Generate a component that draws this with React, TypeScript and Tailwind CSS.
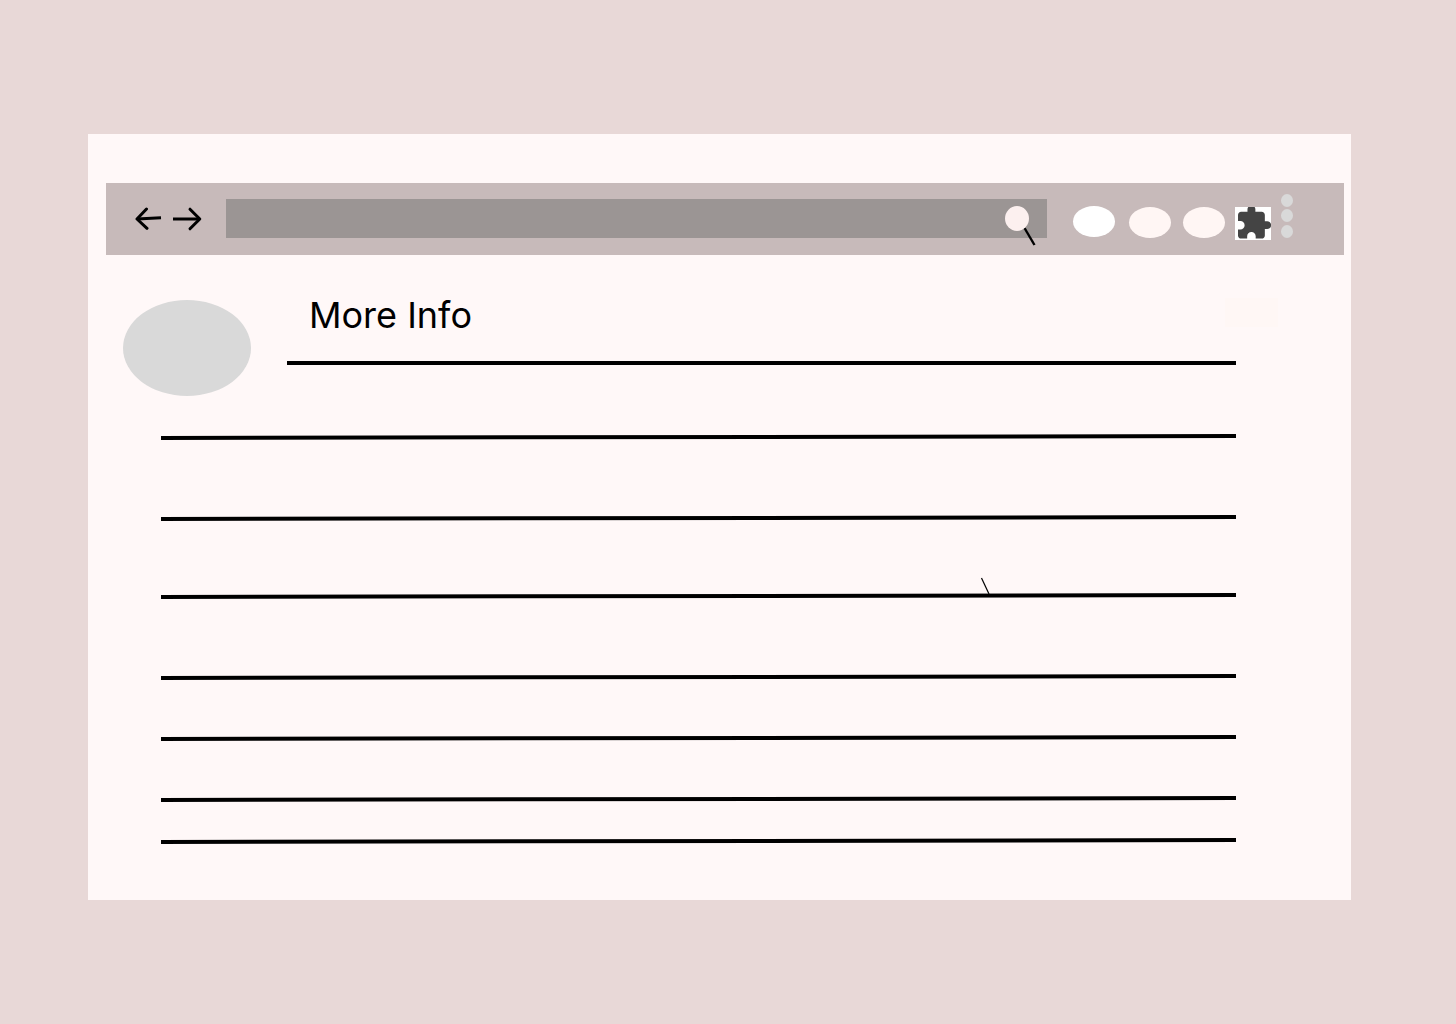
const lines = [
  { id: 1, gap: '' },
  { id: 2, gap: 'mt-[75px]' },
  { id: 3, gap: 'mt-[72px]', tick: true },
  { id: 4, gap: 'mt-[75px]' },
  { id: 5, gap: 'mt-[55px]' },
  { id: 6, gap: 'mt-[55px]' },
  { id: 7, gap: 'mt-9' },
];

function Rule() {
  return (
    <svg className="block h-1.5 w-full" viewBox="0 0 1075 6" preserveAspectRatio="none" aria-hidden="true">
      <line x1="0" y1="4" x2="1075" y2="2" stroke="#000" strokeWidth="4" />
    </svg>
  );
}

function Toolbar() {
  return (
    <header className="flex h-[72px] items-start bg-[#c7baba] pr-[51px] pl-[29px]">
      <nav className="mt-6 flex gap-2.5" aria-label="History">
        <button type="button" aria-label="Back" className="block">
          <svg className="block" width="27" height="24" viewBox="0 0 27 24" fill="none" stroke="#000" strokeWidth="3">
            <path d="M2 12L26 10.8" />
            <path d="M11.5 2L2 12L12 21.3" strokeLinecap="round" strokeLinejoin="round" />
          </svg>
        </button>
        <button type="button" aria-label="Forward" className="block">
          <svg className="block" width="30" height="24" viewBox="0 0 30 24" fill="none" stroke="#000" strokeWidth="3">
            <path d="M1 12H27.5" />
            <path d="M18 2.2L27.8 12L18 21.8" strokeLinecap="round" strokeLinejoin="round" />
          </svg>
        </button>
      </nav>
      <div className="relative mt-4 ml-6 flex-1">
        <input
          type="text"
          aria-label="Search"
          className="block h-[39px] w-full bg-[#9b9594] pr-12 pl-3 font-['Inter',sans-serif] text-base outline-none"
        />
        <button type="button" aria-label="Submit search" className="absolute top-[7px] right-[11px] block">
          <svg className="block" width="32" height="41" viewBox="0 0 32 41">
            <path d="M20.5 22L30.5 39" stroke="#000" strokeWidth="2.4" />
            <ellipse cx="13" cy="12.5" rx="12" ry="12.5" fill="#fcf0ef" />
          </svg>
        </button>
      </div>
      <button type="button" aria-label="Shortcut 1" className="mt-[23px] ml-[26px] h-[31px] w-[42px] rounded-[50%] bg-white" />
      <button type="button" aria-label="Shortcut 2" className="mt-6 ml-3.5 h-[31px] w-[42px] rounded-[50%] bg-[#fff6f4]" />
      <button type="button" aria-label="Shortcut 3" className="mt-6 ml-3 h-[31px] w-[42px] rounded-[50%] bg-[#fff6f4]" />
      <button type="button" aria-label="Extensions" className="mt-6 ml-2.5 block bg-white">
        <svg className="block" width="36" height="33" viewBox="0.1 2 22.8 20.9" fill="#444">
          <path d="M20.5 11H19V7c0-1.1-.9-2-2-2h-4V3.5C13 2.12 11.88 1 10.5 1S8 2.12 8 3.5V5H4c-1.1 0-1.99.9-1.99 2v3.8H3.5c1.49 0 2.7 1.21 2.7 2.7s-1.21 2.7-2.7 2.7H2V20c0 1.1.9 2 2 2h3.8v-1.5c0-1.49 1.21-2.7 2.7-2.7 1.49 0 2.7 1.21 2.7 2.7V22H17c1.1 0 2-.9 2-2v-4h1.5c1.38 0 2.5-1.12 2.5-2.5S21.88 11 20.5 11z" />
        </svg>
      </button>
      <button type="button" aria-label="Menu" className="mt-[11px] ml-2.5 block">
        <svg className="block" width="12" height="44" viewBox="0 0 12 44" fill="#d9d9d9">
          <ellipse cx="6" cy="6.5" rx="6" ry="6.5" />
          <ellipse cx="6" cy="21.5" rx="6" ry="6.5" />
          <ellipse cx="6" cy="37.5" rx="6" ry="6.5" />
        </svg>
      </button>
    </header>
  );
}

export default function App() {
  return (
    <div className="min-h-screen bg-[#e8d8d7] pt-[134px] pr-[105px] pb-[124px] pl-[88px] font-['Inter',sans-serif] text-black">
      <main className="bg-[#fff8f8] pt-[49px] pr-[7px] pb-14 pl-[18px]">
        <Toolbar />
        <section className="mt-[45px] mr-[108px] ml-[17px] flex gap-9">
          <div className="h-24 w-32 shrink-0 rounded-[50%] bg-[#d9d9d9]" />
          <div className="h-[65px] flex-1 border-b-4 border-black">
            <div className="-mt-2 -mr-[42px] flex items-start justify-between pl-[22px]">
              <h1 className="text-4xl leading-[46px] font-normal">More Info</h1>
              <div className="mt-1.5 h-[29px] w-[53px] bg-[#fff7f5]" />
            </div>
          </div>
        </section>
        <ul className="mt-[38px] mr-[108px] ml-[55px]">
          {lines.map((line) => (
            <li key={line.id} className={`relative ${line.gap}`}>
              <Rule />
              {line.tick && (
                <svg className="absolute right-[246px] bottom-1 block" width="10" height="18" viewBox="0 0 10 18" aria-hidden="true">
                  <path d="M1.5 1L9 17" stroke="#000" strokeWidth="1.2" />
                </svg>
              )}
            </li>
          ))}
        </ul>
      </main>
    </div>
  );
}
